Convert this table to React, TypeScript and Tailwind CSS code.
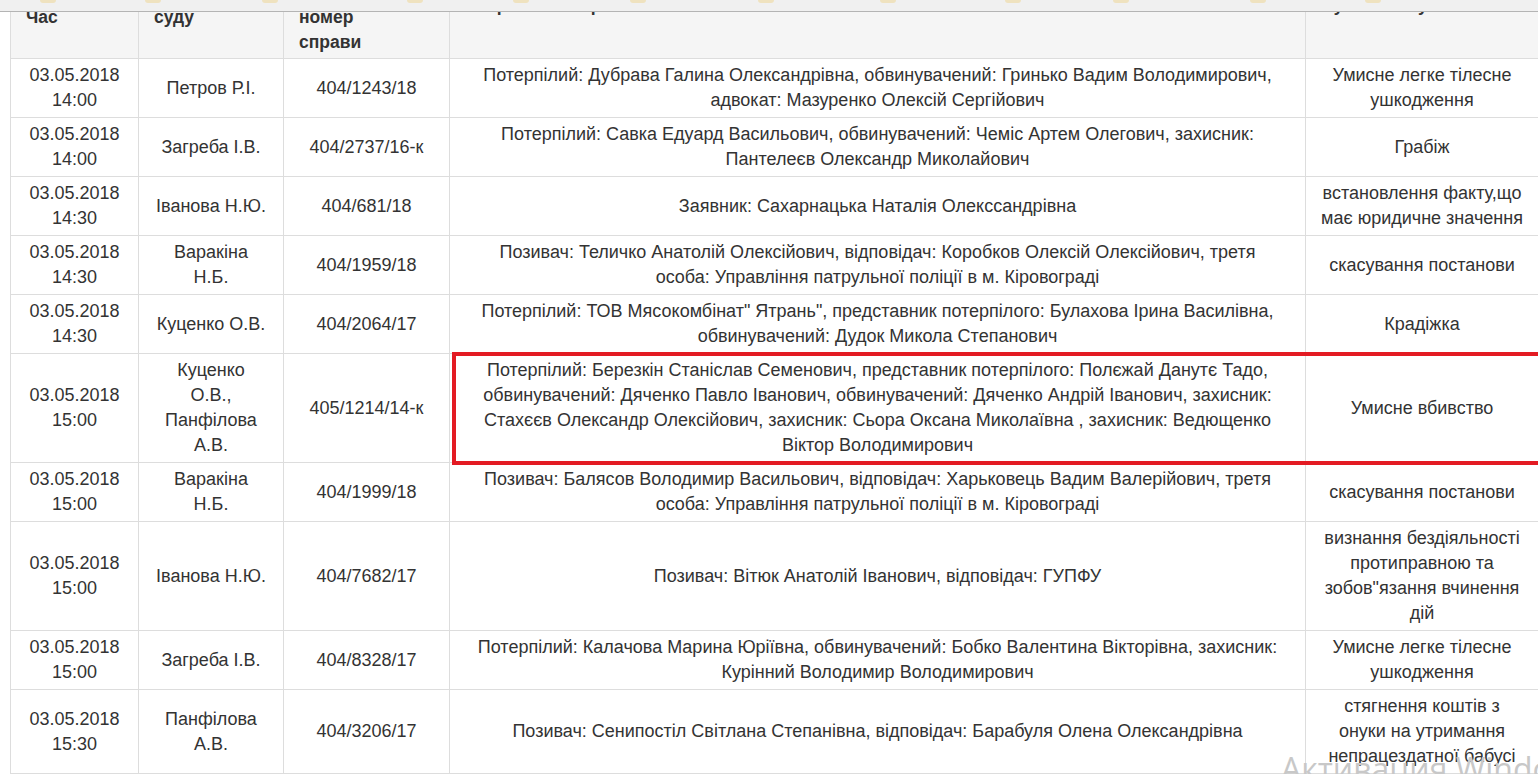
import React from "react";

type Row = {
  date: string;
  time: string;
  judge: string[];
  num: string;
  parties: string[];
  subject: string[];
};

const rows: Row[] = [
  {
    date: "03.05.2018",
    time: "14:00",
    judge: ["Петров Р.І."],
    num: "404/1243/18",
    parties: [
      "Потерпілий: Дубрава Галина Олександрівна, обвинувачений: Гринько Вадим Володимирович,",
      "адвокат: Мазуренко Олексій Сергійович",
    ],
    subject: ["Умисне легке тілесне", "ушкодження"],
  },
  {
    date: "03.05.2018",
    time: "14:00",
    judge: ["Загреба І.В."],
    num: "404/2737/16-к",
    parties: [
      "Потерпілий: Савка Едуард Васильович, обвинувачений: Чеміс Артем Олегович, захисник:",
      "Пантелеєв Олександр Миколайович",
    ],
    subject: ["Грабіж"],
  },
  {
    date: "03.05.2018",
    time: "14:30",
    judge: ["Іванова Н.Ю."],
    num: "404/681/18",
    parties: ["Заявник: Сахарнацька Наталія Олекссандрівна"],
    subject: ["встановлення факту,що", "має юридичне значення"],
  },
  {
    date: "03.05.2018",
    time: "14:30",
    judge: ["Варакіна", "Н.Б."],
    num: "404/1959/18",
    parties: [
      "Позивач: Теличко Анатолій Олексійович, відповідач: Коробков Олексій Олексійович, третя",
      "особа: Управління патрульної поліції в м. Кіровограді",
    ],
    subject: ["скасування постанови"],
  },
  {
    date: "03.05.2018",
    time: "14:30",
    judge: ["Куценко О.В."],
    num: "404/2064/17",
    parties: [
      "Потерпілий: ТОВ Мясокомбінат\" Ятрань\", представник потерпілого: Булахова Ірина Василівна,",
      "обвинувачений: Дудок Микола Степанович",
    ],
    subject: ["Крадіжка"],
  },
  {
    date: "03.05.2018",
    time: "15:00",
    judge: ["Куценко", "О.В.,", "Панфілова", "А.В."],
    num: "405/1214/14-к",
    parties: [
      "Потерпілий: Березкін Станіслав Семенович, представник потерпілого: Полєжай Данутє Тадо,",
      "обвинувачений: Дяченко Павло Іванович, обвинувачений: Дяченко Андрій Іванович, захисник:",
      "Стахєєв Олександр Олексійович, захисник: Сьора Оксана Миколаївна , захисник: Ведющенко",
      "Віктор Володимирович",
    ],
    subject: ["Умисне вбивство"],
  },
  {
    date: "03.05.2018",
    time: "15:00",
    judge: ["Варакіна", "Н.Б."],
    num: "404/1999/18",
    parties: [
      "Позивач: Балясов Володимир Васильович, відповідач: Харьковець Вадим Валерійович, третя",
      "особа: Управління патрульної поліції в м. Кіровограді",
    ],
    subject: ["скасування постанови"],
  },
  {
    date: "03.05.2018",
    time: "15:00",
    judge: ["Іванова Н.Ю."],
    num: "404/7682/17",
    parties: ["Позивач: Вітюк Анатолій Іванович, відповідач: ГУПФУ"],
    subject: ["визнання бездіяльності", "протиправною та", "зобов\"язання вчинення", "дій"],
  },
  {
    date: "03.05.2018",
    time: "15:00",
    judge: ["Загреба І.В."],
    num: "404/8328/17",
    parties: [
      "Потерпілий: Калачова Марина Юріївна, обвинувачений: Бобко Валентина Вікторівна, захисник:",
      "Курінний Володимир Володимирович",
    ],
    subject: ["Умисне легке тілесне", "ушкодження"],
  },
  {
    date: "03.05.2018",
    time: "15:30",
    judge: ["Панфілова", "А.В."],
    num: "404/3206/17",
    parties: ["Позивач: Сенипостіл Світлана Степанівна, відповідач: Барабуля Олена Олександрівна"],
    subject: ["стягнення коштів з", "онуки на утримання", "непрацездатної бабусі"],
  },
];

const marks = [40, 89, 101, 129, 90, 101, 112, 106, 109, 92, 121, 99];

function Lines({ items }: { items: string[] }) {
  return (
    <>
      {items.map((t, i) => (
        <div key={i} className="whitespace-nowrap">
          {t}
        </div>
      ))}
    </>
  );
}

export default function App() {
  const td =
    "border border-[#dddddd] px-[4px] py-[4px] text-center align-middle";
  const th =
    "border border-[#dddddd] px-[15px] py-[4px] text-left align-middle font-bold";
  return (
    <div
      className="relative w-[1538px] h-[774px] overflow-hidden bg-white text-[#333333]"
      style={{ fontFamily: '"Liberation Sans", Arial, sans-serif' }}
    >
      <div className="flex h-[12px] bg-[#f0f0f0] border-b border-[#b4b4b4]">
        {marks.map((m, i) => (
          <div
            key={i}
            className="h-[3px] w-[16px] rounded-b-[4px] bg-[#efe2bf]"
            style={{ marginLeft: m }}
          />
        ))}
      </div>
      <div className="overflow-hidden h-[762px] pl-[10px]">
        <table className="-mt-[61px] w-[1540px] table-fixed border-collapse text-[18px] leading-[25px]">
          <colgroup>
            <col className="w-[128px]" />
            <col className="w-[145px]" />
            <col className="w-[166px]" />
            <col className="w-[856px]" />
            <col className="w-[245px]" />
          </colgroup>
          <thead>
            <tr className="bg-[#f5f5f5] text-[17.5px] leading-[24.6px]">
              <th className={th}>
                Дата
                <br />
                Час
              </th>
              <th className={th}>
                Склад
                <br />
                суду
              </th>
              <th className={th}>
                Єдиний
                <br />
                унікальний
                <br />
                номер
                <br />
                справи
              </th>
              <th className={th}>Сторони по справі</th>
              <th className={th}>Суть позову</th>
            </tr>
          </thead>
          <tbody>
            {rows.map((r, i) => (
              <tr key={i}>
                <td className={td}>
                  <div>{r.date}</div>
                  <div>{r.time}</div>
                </td>
                <td className={td}>
                  <Lines items={r.judge} />
                </td>
                <td className={td}>{r.num}</td>
                <td className={td}>
                  <Lines items={r.parties} />
                </td>
                <td className={`${td} pr-[16px]`}>
                  <Lines items={r.subject} />
                </td>
              </tr>
            ))}
          </tbody>
        </table>
      </div>
      <div className="absolute left-[452px] top-[352px] w-[1100px] h-[113px] border-[4px] border-[#e31b23]" />
      <div
        className="absolute left-[1281px] top-[753px] whitespace-nowrap text-[32px] leading-[32px] text-[#c8c8c8]"
        style={{ fontFamily: '"Open Sans", "Liberation Sans", sans-serif' }}
      >
        Активация Windows
      </div>
    </div>
  );
}
